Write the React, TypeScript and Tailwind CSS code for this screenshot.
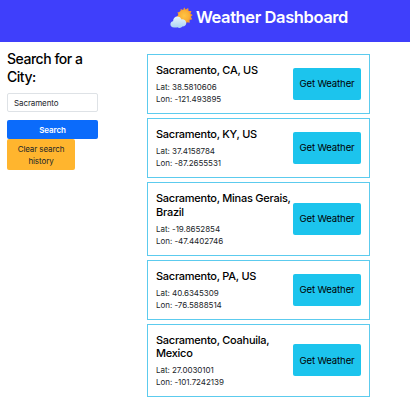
type City = { lines: string[]; lat: string; lon: string };

const cities: City[] = [
  { lines: ["Sacramento, CA, US"], lat: "38.5810606", lon: "-121.493895" },
  { lines: ["Sacramento, KY, US"], lat: "37.4158784", lon: "-87.2655531" },
  { lines: ["Sacramento, Minas Gerais,", "Brazil"], lat: "-19.8652854", lon: "-47.4402746" },
  { lines: ["Sacramento, PA, US"], lat: "40.6345309", lon: "-76.5888514" },
  { lines: ["Sacramento, Coahuila,", "Mexico"], lat: "27.0030101", lon: "-101.7242139" },
];

function SunCloud() {
  return (
    <svg viewBox="0 0 24 24" className="h-[23px] w-[23px]" aria-hidden="true">
      <defs>
        <radialGradient id="sun">
          <stop offset="0" stopColor="#ffc545" />
          <stop offset="1" stopColor="#f9ab33" />
        </radialGradient>
        <linearGradient id="cloud" x1="0" y1="0" x2="0" y2="1">
          <stop offset="0" stopColor="#e9f5fd" />
          <stop offset="1" stopColor="#a9d3f2" />
        </linearGradient>
      </defs>
      <path
        fill="#f39a32"
        d="M14.7 1.2l1.6 2.5 2.7-1.5.4 3 3-.1-1 2.9 2.3 1.3-2 2 1.5 2.5-2.8.8.1 2.9-2.9-.5-1.3 2.4-2.2-1.8-2.6 1.3-.6-2.9-2.9-.1.9-2.8-2.2-1.8 2.1-1.9-1-2.8 3-.4.4-3 2.6 1z"
      />
      <circle cx="14.8" cy="10.2" r="6.3" fill="url(#sun)" />
      <path
        fill="url(#cloud)"
        d="M4.3 22.4C1.7 22.4.4 20.9.4 19c0-1.8 1.2-3 2.8-3.2.1-2.9 2-4.8 4.5-4.8 2.1 0 3.7 1.2 4.2 3 2.9-.4 5 1.3 5 3.8 0 2.4-1.6 3.8-4 3.7-1.2 1.6-3.8 1.8-5.1.6-.9.5-2 .5-3.5.3z"
      />
    </svg>
  );
}

function CityCard({ city }: { city: City }) {
  return (
    <article className="flex items-center justify-between border border-[#5ccbee] py-2 pr-2 pl-2">
      <div className="text-[#212529]">
        <h3 className="mb-[3.5px] w-[137px] pt-px text-[11px] leading-[13.5px] font-medium tracking-[-0.26px] text-black">
          {city.lines.map((line) => (
            <span key={line} className="block whitespace-nowrap">{line}</span>
          ))}
        </h3>
        <p className="text-[8px] leading-3 tracking-[-0.04px]">Lat: {city.lat}</p>
        <p className="text-[8px] leading-3 tracking-[-0.04px]">Lon: {city.lon}</p>
      </div>
      <button className="h-8 w-[68px] shrink-0 rounded-[2px] bg-[#1cc4ed] pt-px text-[9.6px] tracking-[-0.13px] whitespace-nowrap text-black">
        Get Weather
      </button>
    </article>
  );
}

export default function App() {
  return (
    <div className="h-[407px] overflow-hidden bg-white font-['Inter',sans-serif]">
      <header className="flex h-[42px] justify-center gap-[3px] bg-[#3f3ffb] pt-[6px] pl-[108px]">
        <span><SunCloud /></span>
        <h1 className="text-[16.5px] leading-[22px] font-semibold tracking-[-0.4px] whitespace-nowrap text-white">
          Weather Dashboard
        </h1>
      </header>
      <main className="flex pt-3 pl-[7px]">
        <aside className="w-[140px] shrink-0">
          <h2 className="-mt-[4px] w-[91px] text-[14px] leading-[17.5px] font-medium tracking-[-0.48px] text-black">
            Search for a City:
          </h2>
          <input
            className="mt-[8px] block h-[19px] w-[91px] rounded-[2px] border border-[#dee2e6] bg-white px-[6px] text-[8px] tracking-[-0.1px] text-[#212529] outline-none"
            defaultValue="Sacramento"
          />
          <button className="mt-2 block h-[19px] w-[91px] rounded-[2px] bg-[#0b6bfb] text-[8px] font-semibold tracking-[-0.1px] text-white">
            Search
          </button>
          <button className="block h-[31px] w-[68px] rounded-[2px] bg-[#ffb52e] px-1.5 text-[8px] leading-3 tracking-[-0.1px] text-[#212529]">
            Clear search history
          </button>
        </aside>
        <section className="flex w-[223px] flex-col gap-1">
          {cities.map((city) => (
            <CityCard key={city.lat} city={city} />
          ))}
        </section>
      </main>
    </div>
  );
}
